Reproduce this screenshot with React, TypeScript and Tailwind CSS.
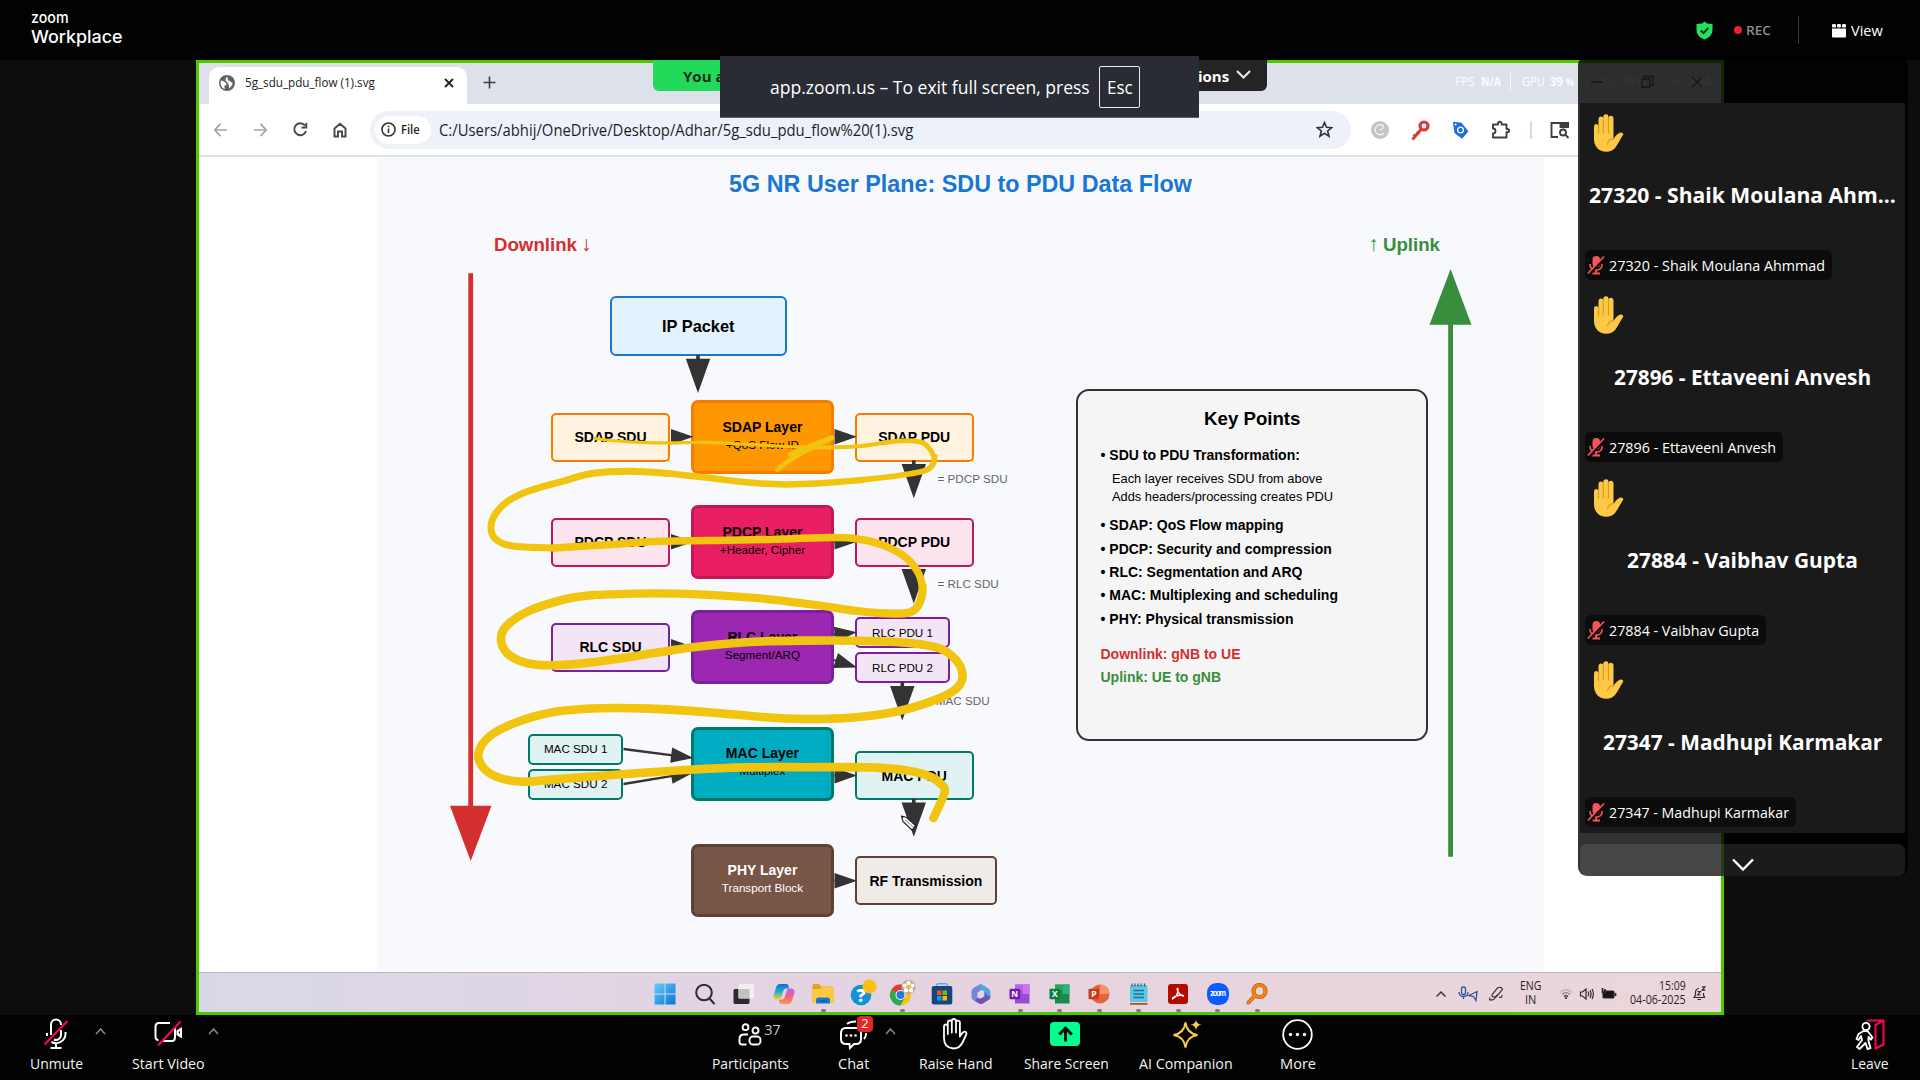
import React, { useLayoutEffect, useRef, useState } from "react";

const SEGOE = "font-['Open_Sans','Noto_Sans',sans-serif]";
const ARIAL = "font-['Liberation_Sans',Arial,sans-serif]";

/* Text squeezed or stretched horizontally to an exact width. */
function Fit({ w, className = "", children }: { w: number; className?: string; children: React.ReactNode }) {
  const ref = useRef<HTMLSpanElement>(null);
  const [scale, setScale] = useState(1);
  useLayoutEffect(() => {
    if (ref.current && ref.current.offsetWidth) setScale(w / ref.current.offsetWidth);
  }, [w]);
  return (
    <span className={`inline-block shrink-0 whitespace-nowrap text-left ${className}`} style={{ width: w }}>
      <span ref={ref} className="inline-block origin-left whitespace-nowrap" style={{ transform: `scaleX(${scale})` }}>
        {children}
      </span>
    </span>
  );
}

/* ---------- Diagram ---------- */

type Node = {
  x: number; y: number; w: number; h: number;
  box: string; title: string; sub?: string; text: string;
};

const SMALL = "text-[11.67px]";
const BOLD = "text-[14px] font-bold";

const layer = (y: number, box: string, title: string, sub: string, text = "text-black"): Node => ({
  x: 690.7, y, w: 143.5, h: 73.5, box: `border-[3.5px] rounded-[7px] ${box}`, title, sub, text: `${BOLD} ${text}`,
});
const unit = (x: number, y: number, box: string, title: string, w = 119, h = 49, text = BOLD): Node => ({
  x, y, w, h, box: `border-[2.5px] rounded-[5px] ${box}`, title, text: `${text} text-black`,
});

const ORANGE = "border-[#f57c00] bg-[#fff3e0]";
const PINK = "border-[#c2185b] bg-[#fce4ec]";
const PURPLE = "border-[#7b1fa2] bg-[#f3e5f5]";
const TEAL = "border-[#00796b] bg-[#e0f2f1]";

const nodes: Node[] = [
  { x: 609.5, y: 295.5, w: 177.5, h: 60.7, box: "border-[2.5px] rounded-[6px] border-[#1976d2] bg-[#e3f2fd]", title: "IP Packet", text: "text-[16.33px] font-bold text-black" },
  unit(551, 412.6, ORANGE, "SDAP SDU"),
  layer(400.3, "border-[#f57c00] bg-[#ff9800]", "SDAP Layer", "+QoS Flow ID"),
  unit(854.7, 412.6, ORANGE, "SDAP PDU"),
  unit(551, 517.6, PINK, "PDCP SDU"),
  layer(505.4, "border-[#c2185b] bg-[#e91e63]", "PDCP Layer", "+Header, Cipher"),
  unit(854.7, 517.6, PINK, "PDCP PDU"),
  unit(551, 622.6, PURPLE, "RLC SDU"),
  layer(610.4, "border-[#7b1fa2] bg-[#9c27b0]", "RLC Layer", "Segment/ARQ"),
  unit(854.7, 616.9, PURPLE, "RLC PDU 1", 95.7, 31.5, SMALL),
  unit(854.7, 651.9, PURPLE, "RLC PDU 2", 95.7, 31.5, SMALL),
  unit(527.8, 733.5, TEAL, "MAC SDU 1", 95.7, 31.5, SMALL),
  unit(527.8, 768.5, TEAL, "MAC SDU 2", 95.7, 31.5, SMALL),
  layer(727, "border-[#00796b] bg-[#00acc1]", "MAC Layer", "Multiplex"),
  unit(854.7, 751.3, TEAL, "MAC PDU"),
  layer(843.5, "border-[#5d4037] bg-[#795548]", "PHY Layer", "Transport Block", "text-white"),
  unit(854.7, 856, "border-[#5d4037] bg-[#efebe9]", "RF Transmission", 142.3, 49),
];

const OX = 377;
const OY = 157;

const labels = [
  { x: 937.5, y: 479, t: "= PDCP SDU" },
  { x: 937.5, y: 584, t: "= RLC SDU" },
  { x: 925.8, y: 700.8, t: "= MAC SDU" },
];

const downArrows = [[698, 356], [913.8, 461.3], [913.8, 566.4], [902.3, 683.4], [913.8, 799.8]];
const sideArrows = [
  [671, 436.8, 693.5, 436.8], [834.5, 436.8, 857, 436.8],
  [671, 541.8, 693.5, 541.8], [834.5, 541.8, 857, 541.8],
  [671, 646.9, 693.5, 646.9], [834, 634.5, 857, 632.3],
  [834, 660, 857, 667.4], [623.5, 749, 693.5, 758], [623.5, 784, 693.5, 772.5],
  [834.5, 775.6, 857, 775.6], [834.5, 880.7, 857, 880.7],
];

const ink: { w: number; p: number[][] }[] = [
  { w: 3.2, p: [[595, 438.3], [610, 440.5], [640, 442.3], [669.6, 442.8], [708, 442.3], [740, 444], [776.8, 446], [800, 447.3]] },
  { w: 4, p: [[798, 447.2], [830, 447.5], [861, 446], [885, 442.5]] },
  { w: 4.9, p: [[884, 442.7], [900, 440.9], [914.5, 441], [924, 443.5], [930.5, 450], [934.5, 458]] },
  { w: 5.8, p: [[934.5, 457], [934, 461.5], [931, 467], [924, 471], [899, 475.5], [861, 480]] },
  { w: 6.5, p: [[862, 479.9], [820, 483.3], [784, 484.4], [746, 482.3], [708, 477.8], [669.6, 473.6]] },
  { w: 7, p: [[670, 473.6], [631, 471.2], [593, 473.3], [566, 480.3], [530, 490.5], [508.9, 500.5], [496, 513], [491, 526.5], [495, 538.5], [512, 546], [554.8, 547.9]] },
  { w: 7.5, p: [[554, 547.9], [608, 544.7], [654, 541.6], [708, 540.6], [765, 539.6], [830, 537.6], [858, 539], [884, 545.6], [907, 558.5], [918.6, 573.5], [922.6, 587]] },
  { w: 8.2, p: [[922.6, 586], [922, 595], [918, 606], [912, 611.5], [904, 613.3], [880, 613.2], [855, 610.8], [823, 606], [765, 598.8], [708, 594.8], [650, 593.4], [593, 595]] },
  { w: 8.6, p: [[594, 595], [566, 599], [528, 611.3], [506, 626.5], [501, 640], [507, 653], [520, 661], [537, 664.8], [560, 665], [593, 662.2], [631, 656.8], [689, 647.7], [746, 642.2], [804, 640.6], [861, 640.8], [911, 643.2], [940, 648.5], [956, 660], [962.5, 674], [958, 687], [940, 698], [899, 711], [853, 717.5], [804, 719], [765, 717.2], [708, 712.2], [650, 708.6], [600, 708.2], [555, 711.8], [516.5, 722.3], [490, 736], [478.5, 753], [484, 768.5], [500, 778], [524, 781.7], [555, 779.4], [612, 775], [689, 769.8], [746, 767.4], [804, 767.2], [870, 767.4], [907, 770.5], [930, 776.5], [943, 786], [944.5, 793], [939.5, 805], [933.5, 818]] },
  { w: 5, p: [[777.5, 469.5], [790, 460], [803, 452], [832, 437.5]] },
  { w: 4.4, p: [[790, 454.5], [803, 449], [815, 444], [832, 438]] },
];

/* Catmull-Rom spline through the stroke's points. */
function smooth(p: number[][]) {
  let d = `M${p[0][0]} ${p[0][1]}`;
  for (let i = 0; i < p.length - 1; i++) {
    const a = p[Math.max(i - 1, 0)], b = p[i], c = p[i + 1], e = p[Math.min(i + 2, p.length - 1)];
    d += `C${b[0] + (c[0] - a[0]) / 6} ${b[1] + (c[1] - a[1]) / 6} ${c[0] - (e[0] - b[0]) / 6} ${c[1] - (e[1] - b[1]) / 6} ${c[0]} ${c[1]}`;
  }
  return d;
}

function Diagram() {
  return (
    <div className={`relative h-[815px] w-[1167px] shrink-0 bg-[#f7f9fc] ${ARIAL}`}>
      <h1 className="pt-[13px] text-center text-[23.33px] leading-[28px] font-bold text-[#1976d2]">
        5G NR User Plane: SDU to PDU Data Flow
      </h1>
      <div className="mt-[35px] flex justify-between pr-[104px] pl-[117px] text-[18.67px] leading-[22px] font-bold">
        <span className="text-[#d32f2f]">Downlink <span className="-ml-px inline-block text-[21px] leading-[22px] font-normal">↓</span></span>
        <span className="text-[#388e3c]"><span className="-mr-px inline-block text-[21px] leading-[22px] font-normal">↑</span> Uplink</span>
      </div>
      {nodes.map((n, i) => (
        <div
          key={i}
          className={`absolute flex flex-col items-center justify-center whitespace-nowrap ${n.box} ${n.text}`}
          style={{ left: n.x - OX, top: n.y - OY, width: n.w, height: n.h }}
        >
          <span className={n.sub ? "leading-[18px]" : "leading-none"}>{n.title}</span>
          {n.sub && <span className="mb-[3px] text-[11.67px] leading-[18px] font-normal">{n.sub}</span>}
        </div>
      ))}
      {labels.map((l) => (
        <span key={l.t} className="absolute text-[11.67px] leading-none text-[#666]" style={{ left: l.x - OX, top: l.y - OY - 6 }}>
          {l.t}
        </span>
      ))}
      <div className="absolute top-[232px] left-[699px] flex h-[352px] w-[352px] flex-col rounded-[13px] border-[2.4px] border-[#333] bg-[#f5f5f5] pl-[22.500px] text-[14px] leading-[23.33px] font-bold text-black">
        <span className="mt-[16px] -ml-[22px] text-center text-[18.67px] leading-[24px]">Key Points</span>
        <span className="mt-[13px]">• SDU to PDU Transformation:</span>
        <span className="mt-[3px] ml-[11.500px] text-[12.83px] leading-[18px] font-normal">Each layer receives SDU from above</span>
        <span className="ml-[11.500px] text-[12.83px] leading-[18px] font-normal">Adds headers/processing creates PDU</span>
        <span className="mt-[8px]">• SDAP: QoS Flow mapping</span>
        <span>• PDCP: Security and compression</span>
        <span>• RLC: Segmentation and ARQ</span>
        <span>• MAC: Multiplexing and scheduling</span>
        <span>• PHY: Physical transmission</span>
        <span className="mt-[11.700px] text-[#d32f2f]">Downlink: gNB to UE</span>
        <span className="text-[#388e3c]">Uplink: UE to gNB</span>
      </div>
      <svg className="absolute inset-0" width="1167" height="815" viewBox="377 157 1167 815">
        <path d="M470.7 273.3V807" stroke="#d32f2f" strokeWidth="4.8" />
        <path d="M450 805.7H491.5L470.7 861Z" fill="#d32f2f" />
        <path d="M1450.6 856.7V323" stroke="#388e3c" strokeWidth="4.8" />
        <path d="M1429.5 324.7H1471.5L1450.6 269Z" fill="#388e3c" />
        {downArrows.map(([x, y]) => (
          <g key={`${x}-${y}`} fill="#333">
            <path d={`M${x - 1.8} ${y - 1}h3.6v5h-3.6Z`} />
            <path d={`M${x - 12.2} ${y + 2.7}h24.4L${x} ${y + 37}Z`} />
          </g>
        ))}
        {sideArrows.map(([x1, y1, x2, y2], i) => {
          const l = Math.hypot(x2 - x1, y2 - y1);
          const a = (Math.atan2(y2 - y1, x2 - x1) * 180) / Math.PI;
          return (
            <g key={i} transform={`translate(${x2} ${y2}) rotate(${a})`}>
              <path d={`M${-l} 0H-15`} stroke="#333" strokeWidth="2.3" />
              <path d="M0 0L-22.5 -7.8V7.8Z" fill="#333" />
            </g>
          );
        })}
        {ink.map((s, i) => (
          <path key={i} d={smooth(s.p)} fill="none" stroke="#f1c40f" strokeWidth={s.w} strokeLinecap="round" strokeLinejoin="round" />
        ))}
        <g transform="translate(901.5 816)">
          <path d="M0 0L4.5 1.2L14 9.5L10.5 14L1.5 5.5Z" fill="#fff" stroke="#222" strokeWidth="1.1" strokeLinejoin="round" />
          <path d="M0 0L2.6 .6L.8 2.8Z" fill="#222" />
          <path d="M4 4L11.5 11" stroke="#555" strokeWidth=".8" />
        </g>
      </svg>
    </div>
  );
}

/* ---------- Browser chrome ---------- */

function TabStrip() {
  return (
    <div className="flex h-[41px] shrink-0 bg-[#dde1ea]">
      <div className="mt-[4px] ml-[10px] flex h-[37px] w-[258px] items-center rounded-t-[10px] bg-white px-[10px] pb-[6px] text-[#202124]">
        <svg width="16" height="16" viewBox="0 0 16 16">
          <circle cx="8" cy="8" r="8" fill="#5f6368" />
          <path d="M2 5.5C4 5.5 5 6.5 6.500 7.500S7.500 10 6 10.500 6.500 13.500 5.500 14C3 13 1.500 10.500 1.500 8ZM8.500 1.500C8 3.500 9.500 4 9 5.500 11 5 11 7 13 7.500 14.500 9 12 12 10 13.500 10.500 11 9 10 9.500 8.500 8 8 8 6.500 6.500 5.500 6.500 4 7 2.500 8.500 1.500Z" fill="#fff" />
        </svg>
        <Fit w={130} className="ml-[10px] text-[13px]">5g_sdu_pdu_flow (1).svg</Fit>
        <svg className="ml-auto mr-[3px]" width="10" height="10" viewBox="0 0 10 10" stroke="#202124" strokeWidth="1.8">
          <path d="M1 1L9 9M9 1L1 9" />
        </svg>
      </div>
      <svg className="mt-[13px] ml-[15.500px]" width="13" height="13" viewBox="0 0 13 13" stroke="#3c4043" strokeWidth="1.6">
        <path d="M6.500 .5V12.500M.5 6.500H12.500" />
      </svg>
      <div className="mt-[9px] ml-auto flex h-[20px] items-center pr-[10px] text-[13px] text-white/90">
        <Fit w={20} className="mr-[6px]">FPS</Fit>
        <Fit w={20} className="font-bold">N/A</Fit>
        <i className="mx-[9px] h-[18px] w-px bg-white/70" />
        <Fit w={23} className="mr-[5px] ml-[2px]">GPU</Fit>
        <Fit w={24} className="font-bold">39<small> %</small></Fit>
        <i className="mx-[7px] h-[18px] w-px bg-white/70" />
        <Fit w={23} className="mr-[5px] ml-[5px]">CPU</Fit>
        <Fit w={24} className="font-bold">18<small> %</small></Fit>
        <i className="mx-[7px] h-[18px] w-px bg-white/70" />
        <Fit w={20} className="mr-[6px] ml-[4px]">LAT</Fit>
        <Fit w={20} className="font-bold">N/A</Fit>
      </div>
    </div>
  );
}

function Toolbar() {
  return (
    <div className="flex h-[53px] shrink-0 items-center border-b-2 border-[#e1e3e8] bg-white pl-[15px]">
      <svg width="136" height="20" viewBox="0 0 136 20" fill="none" stroke="#a3a5a9" strokeWidth="1.7">
        <path d="M13 10H.5M6.500 3.800L.8 10L6.500 16.200" />
        <path d="M40 10H52.500M46.500 3.800L52.200 10L46.500 16.200" />
        <g stroke="#474747" strokeWidth="1.9">
          <path d="M91 5.500A6 6 0 1 0 92 11M92.300 3V7.500H87.500" />
          <path d="M120.500 8.500L126 3.700L131.500 8.500V16.500H128V11.500H124V16.500H120.500Z" />
        </g>
      </svg>
      <div className="ml-[19.500px] flex h-[38px] w-[981px] items-center rounded-full bg-[#edf1fa] pr-[18px] pl-[5px] text-[#1f1f1f]">
        <span className="flex h-[28px] w-[56px] items-center rounded-full bg-white pl-[6px]">
          <svg width="15" height="15" viewBox="0 0 15 15" fill="none" stroke="#333" strokeWidth="1.600">
            <circle cx="7.500" cy="7.500" r="6.500" />
            <path d="M7.500 6.500V11M7.500 3.800V5.300" />
          </svg>
          <Fit w={19} className="ml-[5.500px] pt-[1px] text-[13px] font-semibold">File</Fit>
        </span>
        <Fit w={474} className="ml-[8px] pt-[1px] text-[16px]">C:/Users/abhij/OneDrive/Desktop/Adhar/5g_sdu_pdu_flow%20(1).svg</Fit>
        <svg className="ml-auto" width="17" height="17" viewBox="0 0 17 17" fill="none" stroke="#333" strokeWidth="1.600" strokeLinejoin="miter">
          <path d="M8.500 1.500L10.500 6.300L15.700 6.700L11.700 10L13 15.200L8.500 12.400L4 15.200L5.300 10L1.300 6.700L6.500 6.300Z" />
        </svg>
      </div>
      <div className="ml-[20.500px] flex items-center">
        <svg width="18" height="18" viewBox="0 0 18 18" fill="none">
          <circle cx="9" cy="9" r="9" fill="#c4c4c4" />
          <path d="M13 12A5 5 0 1 1 12.500 5C12.500 8 9.500 9.500 8 8.500" stroke="#f2f2f2" strokeWidth="1.300" />
        </svg>
        <svg className="ml-[21.500px]" width="19" height="22" viewBox="0 0 19 22" fill="none" stroke="#d93a3a">
          <circle cx="13" cy="7" r="4" strokeWidth="3.200" />
          <path d="M10 10.500L1.500 20.500M2.500 15.500L5 18M5.500 13L8 15.500" strokeWidth="2.800" />
        </svg>
        <svg className="ml-[22px]" width="17" height="18" viewBox="0 0 17 18">
          <path d="M1 2Q1 1 2 .8L9.500 1.800L15.800 9.500Q16.300 10.300 15.800 11L10.500 17.200Q10 17.600 9.300 17.200L2.500 12Z" fill="#1b6fe0" />
          <circle cx="8.500" cy="9" r="2.900" fill="none" stroke="#fff" strokeWidth="1.400" />
          <circle cx="3.600" cy="3.600" r="1" fill="#fff" />
        </svg>
        <svg className="ml-[22px]" width="20" height="20" viewBox="0 0 20 20">
          <path d="M2 4.500H7V3.500A1.800 1.800 0 0 1 10.600 3.500V4.500H15.500V9H16.500A1.600 1.600 0 0 1 16.500 12.200H15.500V17.500H2V13.500A2.300 2.300 0 0 0 2 8.500Z" fill="none" stroke="#3c4043" strokeWidth="1.900" strokeLinejoin="round" />
        </svg>
        <i className="ml-[19px] h-[18px] w-[2px] bg-[#cfdcf6]" />
        <svg className="ml-[18.500px]" width="20" height="18" viewBox="0 0 20 18" fill="none" stroke="#3c4043" strokeWidth="1.900">
          <path d="M8 16H1.500V2H18V6" />
          <path d="M10.500 2H18V6H10.500Z" fill="#3c4043" />
          <circle cx="13" cy="11.500" r="3" />
          <path d="M15.300 13.700L18.500 17" />
        </svg>
      </div>
    </div>
  );
}

/* ---------- Windows taskbar ---------- */

const office = (letter: string, dark: string, mid: string, light: string, round = false) => (
  <svg width="22" height="22" viewBox="0 0 22 22">
    {round ? (
      <>
        <circle cx="12" cy="11" r="9.500" fill={mid} />
        <path d="M12 1.500A9.500 9.500 0 0 1 21.500 11H12Z" fill={light} />
      </>
    ) : (
      <>
        <path d="M6 1.500H20.500V20.500H6Z" fill={mid} />
        <path d="M13.500 1.500H20.500V11H13.500Z" fill={light} />
        <path d="M6 1.500H13.500V7H6Z" fill={light} opacity=".6" />
      </>
    )}
    <rect x=".5" y="5.800" width="10.500" height="10.500" rx="1" fill={dark} />
    <text x="5.800" y="14" fontSize="8.500" fontWeight="700" fill="#fff" textAnchor="middle" fontFamily="Open Sans, sans-serif">{letter}</text>
  </svg>
);

const taskIcons: { icon: React.ReactNode; dot?: boolean }[] = [
  { icon: (
    <svg width="22" height="22" viewBox="0 0 22 22">
      <defs><linearGradient id="win" x1="0" y1="0" x2="1" y2="1"><stop stopColor="#5fd0fb" /><stop offset="1" stopColor="#0a74d8" /></linearGradient></defs>
      <path d="M.5 .5H10.500V10.500H.5ZM11.500 .5H21.500V10.500H11.500ZM.5 11.500H10.500V21.500H.5ZM11.500 11.500H21.500V21.500H11.500Z" fill="url(#win)" />
    </svg>) },
  { icon: (
    <svg width="22" height="22" viewBox="0 0 22 22" fill="none" stroke="#2d2a33" strokeWidth="2" strokeLinecap="round">
      <circle cx="10" cy="9.500" r="7.800" /><path d="M15.500 15.500L20 20.500" />
    </svg>) },
  { icon: (
    <svg width="22" height="22" viewBox="0 0 22 22">
      <rect x=".5" y="6" width="16" height="15" rx="1.500" fill="#2b2b2b" />
      <rect x="5.500" y="1" width="15.500" height="14.500" rx="1.500" fill="#f4f2f4" opacity=".9" />
      <path d="M5.500 6H16.500V15.500H5.500Z" fill="#c3c1c3" />
    </svg>) },
  { icon: (
    <svg width="22" height="22" viewBox="0 0 22 22">
      <defs>
        <linearGradient id="cpa" x1="0" y1="0" x2="0" y2="1"><stop stopColor="#1769d9" /><stop offset=".5" stopColor="#25b0c4" /><stop offset="1" stopColor="#f2d23c" /></linearGradient>
        <linearGradient id="cpb" x1="0" y1="0" x2="0" y2="1"><stop stopColor="#b06be8" /><stop offset=".5" stopColor="#ef5f8e" /><stop offset="1" stopColor="#f79a4a" /></linearGradient>
      </defs>
      <path d="M7 1H13.500Q15 1 15.600 3L16.200 5.500H13Q11 5.500 10.300 8L8.300 14.500Q7.600 16.500 5.500 16.500H3Q-.5 16 .6 12L3 4.500Q4 1 7 1Z" fill="url(#cpa)" />
      <path d="M15 21H8.500Q7 21 6.400 19L5.800 16.500H9Q11 16.500 11.700 14L13.700 7.500Q14.400 5.500 16.500 5.500H19Q22.500 6 21.400 10L19 17.500Q18 21 15 21Z" fill="url(#cpb)" />
    </svg>) },
  { dot: true, icon: (
    <svg width="22" height="22" viewBox="0 0 22 22">
      <path d="M.5 2.500Q.5 1 2 1H7L9.500 3.500H20Q21.500 3.500 21.500 5V20H.5Z" fill="#e3a41a" />
      <path d="M.5 6H8L10 4H21.500V20H.5Z" fill="#fdc93e" />
      <path d="M4 20.500V17Q4 14.500 6.500 14.500H15.500Q18 14.500 18 17V20.500Z" fill="#1976d2" />
      <path d="M7.500 17.500H14.500V18.700H7.500Z" fill="#0b4f9c" />
    </svg>) },
  { icon: (
    <svg width="26" height="26" viewBox="0 0 26 26" overflow="visible">
      <circle cx="11" cy="14" r="10.300" fill="#1292d4" />
      <text x="11" y="20.500" fontSize="18" fontWeight="800" fill="#fff" textAnchor="middle" fontFamily="Open Sans, sans-serif">?</text>
      <circle cx="19.500" cy="5.500" r="7" fill="#ffbf12" />
    </svg>) },
  { dot: true, icon: (
    <svg width="26" height="26" viewBox="0 0 26 26" overflow="visible">
      <circle cx="11.500" cy="14" r="10.500" fill="#fbc116" />
      <path d="M11.500 14L2.400 8.750A10.500 10.500 0 0 1 20.600 8.750Z" fill="#e33b2e" />
      <path d="M11.500 14L2.400 8.750A10.500 10.500 0 0 0 11.500 24.500L16 16.500Z" fill="#2da94f" />
      <circle cx="11.500" cy="14" r="5" fill="#fff" /><circle cx="11.500" cy="14" r="4" fill="#2a74e8" />
      <circle cx="19.500" cy="6" r="7" fill="#b7a58c" />
      <g fill="#fff">
        <circle cx="19.500" cy="1.900" r="2.200" /><circle cx="23.400" cy="4.600" r="2.200" /><circle cx="22" cy="9.300" r="2.200" /><circle cx="17" cy="9.300" r="2.200" /><circle cx="15.600" cy="4.600" r="2.200" />
      </g>
      <circle cx="19.500" cy="6" r="2.200" fill="#f3b93b" />
    </svg>) },
  { icon: (
    <svg width="22" height="22" viewBox="0 0 22 22">
      <path d="M5.500 4V2Q5.500 .7 7 .7H15Q16.500 .7 16.500 2V4" fill="none" stroke="#44b8ee" strokeWidth="1.400" />
      <rect x=".7" y="3" width="20.600" height="18.500" rx="2" fill="#17467e" />
      <path d="M6 7.500H10.500V12H6Z" fill="#f25022" /><path d="M11.500 7.500H16V12H11.500Z" fill="#7fba00" />
      <path d="M6 13H10.500V17.500H6Z" fill="#00a4ef" /><path d="M11.500 13H16V17.500H11.500Z" fill="#ffb900" />
    </svg>) },
  { icon: (
    <svg width="22" height="22" viewBox="0 0 22 22">
      <path d="M10.500 1L4 4.500Q1.500 6 1.500 8.500V14Q1.500 16.500 4 17.500L7.500 15.500V9.500L14 5.500L15.500 3.500Z" fill="#7388dc" />
      <path d="M10.500 1L18.500 5.500Q20.500 7 20.500 9V14.500L14.500 13V8.500L10 6Q8.500 3 10.500 1Z" fill="#4fa6e0" />
      <path d="M20.500 13.500Q20.500 16 18.500 17L12.500 20.700Q11 21.500 9.500 20.700L4 17.500L7.500 15L11 15.500L14.500 13V8.500Q17 13 20.500 13.500Z" fill="#6f56b4" />
    </svg>) },
  { dot: true, icon: office("N", "#7719aa", "#9a4bd4", "#cf73f0") },
  { dot: true, icon: office("X", "#107c41", "#1a8a4c", "#2fb572") },
  { dot: true, icon: office("P", "#c43e1c", "#e2653f", "#ff8f6b", true) },
  { dot: true, icon: (
    <svg width="20" height="22" viewBox="0 0 20 22">
      <rect x="1" y="2" width="17.500" height="17" rx="1" fill="#5cc6e6" />
      <path d="M3 .5V3.500M6 .5V3.500M9 .5V3.500M12 .5V3.500M15.500 .5V3.500" stroke="#2b5d73" strokeWidth="1.200" />
      <path d="M4.500 7.500H15M4.500 11H15M4.500 14.500H15" stroke="#1f6f91" strokeWidth="1.400" />
      <path d="M1 20H18.500V21.800H1Z" fill="#a85b1c" />
    </svg>) },
  { dot: true, icon: (
    <svg width="20" height="20" viewBox="0 0 20 20" fill="none">
      <rect width="20" height="20" rx="3" fill="#b30b00" />
      <path d="M4.500 15Q10 12 10 5.500Q10 4 9.300 4.500C8.500 6 12 12 15.500 12Q16 11 13 11Q8 11.300 5 13.500Q4 14.500 4.500 15Z" stroke="#fff" strokeWidth="1.300" strokeLinejoin="round" />
    </svg>) },
  { dot: true, icon: (
    <svg width="22" height="22" viewBox="0 0 22 22">
      <rect width="22" height="22" rx="9.500" fill="#0b5cff" />
      <text x="11" y="13.300" fontSize="7.400" fontWeight="700" fill="#fff" textAnchor="middle" fontFamily="Inter, sans-serif" textLength="16">zoom</text>
    </svg>) },
  { dot: true, icon: (
    <svg width="22" height="22" viewBox="0 0 22 22" fill="none" strokeLinecap="round">
      <circle cx="13.500" cy="8" r="6" stroke="#b35c0c" strokeWidth="4.200" />
      <path d="M9 12.500L2.500 19.500" stroke="#b35c0c" strokeWidth="4" />
      <circle cx="13.500" cy="8" r="6" stroke="#f5820d" strokeWidth="2.800" />
      <path d="M9 12.500L2.500 19.500" stroke="#f5820d" strokeWidth="2.600" />
    </svg>) },
];

function Taskbar() {
  return (
    <div className="flex h-[40px] shrink-0 border-t border-[#b9b3bd] bg-linear-to-r from-[#dad8e8] via-[#e6d3e0] to-[#ead6da] pl-[446.500px]">
      {taskIcons.map((t, i) => (
        <div key={i} className="flex w-[39.470px] flex-col items-center">
          <div className="flex h-[34px] items-center justify-center pt-[7px]">{t.icon}</div>
          {t.dot && <i className="mt-[2px] h-[3px] w-[5px] rounded-full bg-[#86767f]" />}
        </div>
      ))}
      <div className="ml-auto flex items-center pr-[15.500px] text-[12px] leading-[14px] text-[#2b2427]">
        <svg width="72" height="20" viewBox="0 0 72 20" fill="none" stroke="#3b3236" strokeWidth="1.500" className="-ml-[1px] mt-[2px]">
          <path d="M.5 12.500L5 8L9.500 12.500" />
          <g stroke="#2f5597" strokeWidth="1.300">
            <rect x="25.500" y="3" width="4" height="7.500" rx="2" />
            <path d="M23 8Q23 12.500 27.500 12.500T32 8M27.500 12.500V15M33 11.500L41 7.500L40 16.500L37.500 12.500Z" />
          </g>
          <path d="M53 15.500Q57 17.500 60 13L66.500 5.500Q65 2 61.500 4L56.500 10Q55 12.500 57.500 13Q60 13 61.500 10.500M54 13.500Q53 16 56 16M63 13Q66 14.500 66 11" strokeWidth="1.200" />
        </svg>
        <span className="ml-[12px] flex w-[22px] flex-col items-center">
          <Fit w={21}>ENG</Fit>
          <Fit w={11}>IN</Fit>
        </span>
        <svg className="ml-[17px] mt-[2px]" width="58" height="16" viewBox="0 0 58 16" fill="none" stroke="#2f272a" strokeWidth="1.200">
          <path d="M1 6.500Q7 1 13 6.500" stroke="#bfb0b4" /><path d="M3 8.500Q7 4.800 11 8.500" stroke="#8f8286" /><path d="M5 10.500Q7 8.700 9 10.500" />
          <circle cx="7" cy="12" r="1.100" fill="#2f272a" stroke="none" />
          <path d="M21.500 6H23.500L27 3V13L23.500 10H21.500ZM29 5.500Q30.500 8 29 10.500M31 4.300Q33.100 8 31 11.700M33 3Q35.800 8 33 13" />
          <rect x="44" y="5" width="11" height="7" rx="1" fill="#1b1517" /><path d="M56.500 7V10M43.500 2V7M46 3V7" strokeWidth="1.700" />
        </svg>
        <span className="ml-[11px] flex w-[58px] flex-col items-end">
          <Fit w={27}>15:09</Fit>
          <Fit w={56}>04-06-2025</Fit>
        </span>
        <svg className="ml-[7px] mt-[2px]" width="13" height="15" viewBox="0 0 13 15" fill="none" stroke="#2f272a" strokeWidth="1.200">
          <path d="M6 2.500Q2.500 3 2.500 6.500V9L1 11.500H11.500L10.500 9V7M4.500 13.500H8M4.500 5.500H7.300L4.700 9H7.500M9 .8H12L9.200 4.200H12.300" />
        </svg>
      </div>
    </div>
  );
}

/* ---------- Participants strip ---------- */

const Hand = () => (
  <svg width="31" height="38" viewBox="0 0 31 38">
    <path d="M1 13Q1 10 3.200 10T5.500 12.500V5.500Q5.500 2.500 8 2.500T10.300 5V3Q10.300 .3 13 .3T15.500 3V4Q15.700 1.800 18 1.800T20.500 4.500V25Q22 22.500 24 20.500L27 18.600Q30.500 18.300 30.300 20.500Q27.500 25 25 29.500Q22.500 34.500 19 36.500Q13 39 7.500 36.500Q1.500 33.500 1 26Z" fill="#fcc846" />
    <path d="M5.500 11V19.500M10.300 5V19M15.500 4V19M20.500 25Q16 24.500 14.500 30" fill="none" stroke="#d9a01f" strokeWidth="1.200" strokeLinecap="round" />
  </svg>
);

const MutedMic = () => (
  <svg width="18" height="20" viewBox="0 0 18 20" fill="none">
    <rect x="5.500" y="1" width="7.500" height="11.500" rx="3.700" fill="#f4545a" />
    <path d="M3 9Q3 15 9.200 15T15 9" stroke="#f4545a" strokeWidth="1.600" />
    <path d="M9.200 15V18M5.500 18.500H13" stroke="#f4545a" strokeWidth="2" />
    <path d="M1.500 19.500L17.500 3" stroke="#0c0c0c" strokeWidth="3" />
    <path d="M.8 18.500L17 1.500" stroke="#f4545a" strokeWidth="1.700" />
  </svg>
);

const people = [
  { name: "27320 - Shaik Moulana Ahm...", w: 307, tag: "27320 - Shaik Moulana Ahmmad", tw: 216 },
  { name: "27896 - Ettaveeni Anvesh", w: 257, tag: "27896 - Ettaveeni Anvesh", tw: 167 },
  { name: "27884 - Vaibhav Gupta", w: 231, tag: "27884 - Vaibhav Gupta", tw: 150.500 },
  { name: "27347 - Madhupi Karmakar", w: 279, tag: "27347 - Madhupi Karmakar", tw: 180 },
];

function SidePanel() {
  return (
    <aside className="absolute top-[56px] left-[1578px] flex h-[820px] w-[330px] flex-col rounded-[9px] bg-black/80 px-[2px] pt-[47px] text-white">
      <svg className="absolute top-[19px] left-[12px]" width="112" height="14" viewBox="0 0 112 14" fill="none" stroke="#161718" strokeWidth="1.500">
        <path d="M1 7H13M54 4V1.500H63V10H60M52 4H60V12H52ZM102 2L112 12M112 2L102 12" />
      </svg>
      <div className="mr-[1px] bg-[#1a1a1a]">
        {people.map((p) => (
          <div key={p.tag} className="flex h-[182.450px] flex-col pt-[11px]">
            <div className="h-[38px] pl-[13px]"><Hand /></div>
            <div className="mt-[25px] flex justify-center text-[22px] leading-[34px] font-bold"><Fit w={p.w}>{p.name}</Fit></div>
            <div className="mt-[39px] ml-[5px] flex h-[30px] items-center self-start rounded-[6px] bg-[#0c0c0c] pr-[7px] pl-[2px] text-[15px]">
              <MutedMic />
              <Fit w={p.tw} className="ml-[3.500px]">{p.tag}</Fit>
            </div>
          </div>
        ))}
      </div>
      <div className="mt-[11px] mr-[1px] flex h-[32px] items-center justify-center rounded-[7px] bg-white/10 pt-[9px]">
        <svg width="22" height="13" viewBox="0 0 22 13" fill="none" stroke="#fff" strokeWidth="2.400">
          <path d="M1 1.500L11 11.500L21 1.500" />
        </svg>
      </div>
    </aside>
  );
}

/* ---------- Meeting controls ---------- */

const Caret = ({ className = "" }: { className?: string }) => (
  <svg className={`absolute ${className}`} width="11" height="7" viewBox="0 0 11 7" fill="none" stroke="#8b8b8b" strokeWidth="1.500">
    <path d="M1 6L5.500 1L10 6" />
  </svg>
);

function Control({ left, w, label, caret, children }: { left: number; w: number; label: string; caret?: string; children: React.ReactNode }) {
  return (
    <button className="relative flex shrink-0 flex-col items-center" style={{ width: w, marginLeft: left }}>
      <span className="mt-[3px] flex h-[33px] items-center justify-center">{children}</span>
      <Fit w={w} className="text-[15px] leading-[24px]">{label}</Fit>
      {caret && <Caret className={`top-[13px] ${caret}`} />}
    </button>
  );
}

function Controls() {
  return (
    <footer className="flex h-[65px] bg-[#020202] text-[#f2f2f2]">
      <Control left={30} w={53} label="Unmute" caret="left-[64.5px]">
        <svg className="-ml-[2px] -mt-[1px]" width="26" height="32" viewBox="0 0 26 32" fill="none" stroke="#fff" strokeWidth="2">
          <path d="M8 17V6.500A5 5 0 0 1 18 6.500V7M18 12V17A5 5 0 0 1 11 21.500M4 15V18M22.500 14V16A9.500 9.500 0 0 1 8.500 24M13 25V30M7.500 30H18.500" />
          <path d="M1.500 26.500L24.500 3" stroke="#f5045a" strokeWidth="2.200" />
        </svg>
      </Control>
      <Control left={49} w={73} label="Start Video" caret="left-[75.5px]">
        <svg className="-mt-[4px]" width="30" height="26" viewBox="0 0 30 26" fill="none" stroke="#fff" strokeWidth="2">
          <path d="M4.500 20Q1.500 20 1.500 17V7Q1.500 3 5 3H16M21 8V17Q21 21 18 21H8" />
          <path d="M22.500 10.500L28 7V18.500L22.500 15Z" fill="#fff" stroke="none" /><path d="M24.500 12L26 11V14.500Z" fill="#020202" stroke="none" />
          <path d="M4 25.500L26.500 1.500" stroke="#f5045a" strokeWidth="2.200" />
        </svg>
      </Control>
      <Control left={507} w={77} label="Participants">
        <svg className="ml-[17px]" width="24" height="24" viewBox="0 0 24 24" fill="none" stroke="#fff" strokeWidth="1.900">
          <circle cx="7.500" cy="4.200" r="2.900" /><circle cx="17.500" cy="7.500" r="3" />
          <path d="M8.500 21.500H4Q1.500 21.500 1.500 19V16Q1.500 11.500 6 11.500H10" />
          <rect x="11.500" y="13.500" width="11" height="8" rx="3.500" />
        </svg>
        <Fit w={16} className="-mt-[10px] ml-[3px] text-[14px] text-[#c9c9c9]">37</Fit>
      </Control>
      <Control left={49} w={31} label="Chat" caret="left-[47px]">
        <span className="relative">
          <svg width="29" height="30" viewBox="0 0 29 30" fill="none" stroke="#fff" strokeWidth="2">
            <path d="M7 8H17Q22 8 22 13V19Q22 24 17 24H15L11 28L10.500 24H7Q2 24 2 19V13Q2 8 7 8Z" />
            <path d="M8 4Q11 1.500 17 1.500M27 13Q27.500 16 25 19" />
            <g fill="#fff" stroke="none"><circle cx="7.500" cy="15.500" r="1.300" /><circle cx="12" cy="15.500" r="1.300" /><circle cx="16.500" cy="15.500" r="1.300" /></g>
          </svg>
          <span className="absolute -top-[4px] left-[18px] flex h-[16px] w-[16px] items-center justify-center rounded-[4px] bg-[#e02828] text-[13px] leading-none text-white">2</span>
        </span>
      </Control>
      <Control left={49.500} w={74} label="Raise Hand">
        <svg className="-ml-[2px] -mt-[2px]" width="26" height="32" viewBox="0 0 26 32" fill="none" stroke="#fff" strokeWidth="1.800" strokeLinejoin="round" strokeLinecap="round">
          <path d="M2 20V8.500Q2 6.500 3.800 6.500T5.800 8.500V16M5.800 15V4.500Q5.800 2.500 7.800 2.500T9.800 4.500V14.500M9.800 13.500V3Q9.800 1 11.800 1T14 3V14.500M14 13V4.500Q14 2.700 15.900 2.700T17.900 4.500V18.500L20.500 14.800Q22 13 23.800 14Q25 15 24 17L20.500 24.500Q17.500 30.500 11.500 30.500Q2 30 2 20" />
        </svg>
      </Control>
      <Control left={31} w={85} label="Share Screen">
        <span className="-ml-[2px] -mt-[2px] flex h-[24px] w-[30px] items-center justify-center rounded-[4px] bg-[#00ff8f]">
          <svg width="15" height="16" viewBox="0 0 15 16" fill="none" stroke="#04130b" strokeWidth="3">
            <path d="M7.500 15.500V3M1.200 8.500L7.500 2.200L13.800 8.500" />
          </svg>
        </span>
      </Control>
      <Control left={30.500} w={94} label="AI Companion">
        <svg className="ml-[1px] -mt-[2px]" width="30" height="30" viewBox="0 0 30 30" fill="none" stroke="#fdce4c" strokeWidth="1.900" strokeLinejoin="miter">
          <path d="M13.500 3.500Q15 14.500 25.500 16Q15 17.500 13.500 28.500Q12 17.500 1.500 16Q12 14.500 13.500 3.500Z" />
          <path d="M24 .5Q24.500 5 29.500 5.800Q24.500 6.500 24 11.500Q23.500 6.500 18.500 5.800Q23.500 5 24 .5Z" fill="#fdce4c" stroke="none" />
        </svg>
      </Control>
      <Control left={46.500} w={36} label="More">
        <svg width="31" height="31" viewBox="0 0 31 31" fill="#fff">
          <circle cx="15.500" cy="15.500" r="14.300" fill="none" stroke="#fff" strokeWidth="1.800" />
          <circle cx="8.500" cy="15.500" r="1.700" /><circle cx="15.500" cy="15.500" r="1.700" /><circle cx="22.500" cy="15.500" r="1.700" />
        </svg>
      </Control>
      <Control left={535.500} w={38} label="Leave">
        <svg width="30" height="31" viewBox="0 0 30 31" fill="none" stroke="#fff" strokeWidth="1.900" strokeLinejoin="round">
          <circle cx="11" cy="7.500" r="3.600" />
          <path d="M8.500 12L3.500 15L1.500 20L3.500 21L6 17L7 21L2 28L4.500 30L10.500 24L12.500 30L15.500 29L13.500 22V18L16 20.500L17.500 18.500L14.500 14.500L12.500 12Z" />
          <path d="M11.500 1.500H28.500V25.500L20.500 29.500V6L28.500 1.500" stroke="#f5045a" strokeWidth="2.100" />
        </svg>
      </Control>
    </footer>
  );
}

export default function App() {
  return (
    <div className={`relative flex h-[1080px] w-[1920px] flex-col overflow-hidden bg-[#0d0d0d] ${SEGOE}`}>
      <header className="flex h-[60px] shrink-0 items-center bg-[#020202] text-white">
        <div className="ml-[31px] flex flex-col pb-[3px] font-['Inter',sans-serif] leading-none">
          <Fit w={38} className="h-[15px] text-[15px] leading-[12px] font-medium">zoom</Fit>
          <Fit w={92} className="text-[17.500px] leading-[19px] font-medium">Workplace</Fit>
        </div>
        <svg className="ml-auto" width="17" height="19" viewBox="0 0 17 19">
          <path d="M8.500 .5L11 2.500L16.500 3V9Q16.500 15.500 8.500 18.500Q.5 15.500 .5 9V3L6 2.500Z" fill="#23e05f" />
          <path d="M4.800 9.500L7.500 12.200L12.300 6.800" fill="none" stroke="#062810" strokeWidth="1.800" />
        </svg>
        <i className="ml-[20.500px] h-[8px] w-[8px] rounded-full bg-[#e8242a]" />
        <Fit w={25} className="ml-[4px] pt-[1px] text-[12px] font-semibold text-[#8f8f8f]">REC</Fit>
        <i className="ml-[27px] h-[28px] w-px bg-[#3a3a3a]" />
        <svg className="ml-[33.500px]" width="14" height="15" viewBox="0 0 14 15" fill="#fff">
          <path d="M0 5.500H14V13.500Q14 14.500 13 14.500H1Q0 14.500 0 13.500Z" />
          <rect x="0" y="1" width="4" height="3.400" rx="1.200" /><rect x="5" y="1" width="4" height="3.400" rx="1.200" /><rect x="10" y="1" width="4" height="3.400" rx="1.200" />
        </svg>
        <Fit w={32} className="mr-[37px] ml-[5px] text-[15px] font-medium">View</Fit>
      </header>

      <main className="flex h-[955px] shrink-0 pl-[196px]">
        <section className="flex w-[1528px] flex-col border-[3px] border-[#4fc800]">
          <TabStrip />
          <Toolbar />
          <div className="flex h-[815px] shrink-0 bg-white pl-[178px]">
            <Diagram />
          </div>
          <Taskbar />
        </section>
      </main>

      <Controls />

      <div className="absolute top-[60px] left-[653px] flex h-[31px] w-[72px] items-center rounded-b-[6px] bg-[#23d959] pt-[1px] pl-[30px] text-[15px] font-bold text-[#1f2a22]">
        <Fit w={41}>You a</Fit>
      </div>
      <div className="absolute top-[60px] left-[1190px] flex h-[31px] w-[77px] items-center justify-end rounded-b-[6px] bg-[#242424] pt-[1px] pr-[16px] text-[15px] font-bold text-white">
        <Fit w={31}>ions</Fit>
        <svg className="ml-[7px] -mt-[4px]" width="15" height="9" viewBox="0 0 15 9" fill="none" stroke="#e6e6e6" strokeWidth="2.200">
          <path d="M1 1L7.500 7.500L14 1" />
        </svg>
      </div>
      <SidePanel />
      <div className="absolute top-[56px] left-[720px] flex h-[62px] w-[479px] items-center border-b border-[#5b5e63] bg-[#292c34] pl-[50px] text-[19px] text-white">
        <Fit w={320} className="pt-[2px]">app.zoom.us – To exit full screen, press</Fit>
        <span className="ml-[9px] flex h-[42px] w-[41px] items-center justify-center rounded-[2px] border-[1.500px] border-white/90 pt-[2px]">
          <Fit w={26}>Esc</Fit>
        </span>
      </div>
    </div>
  );
}
